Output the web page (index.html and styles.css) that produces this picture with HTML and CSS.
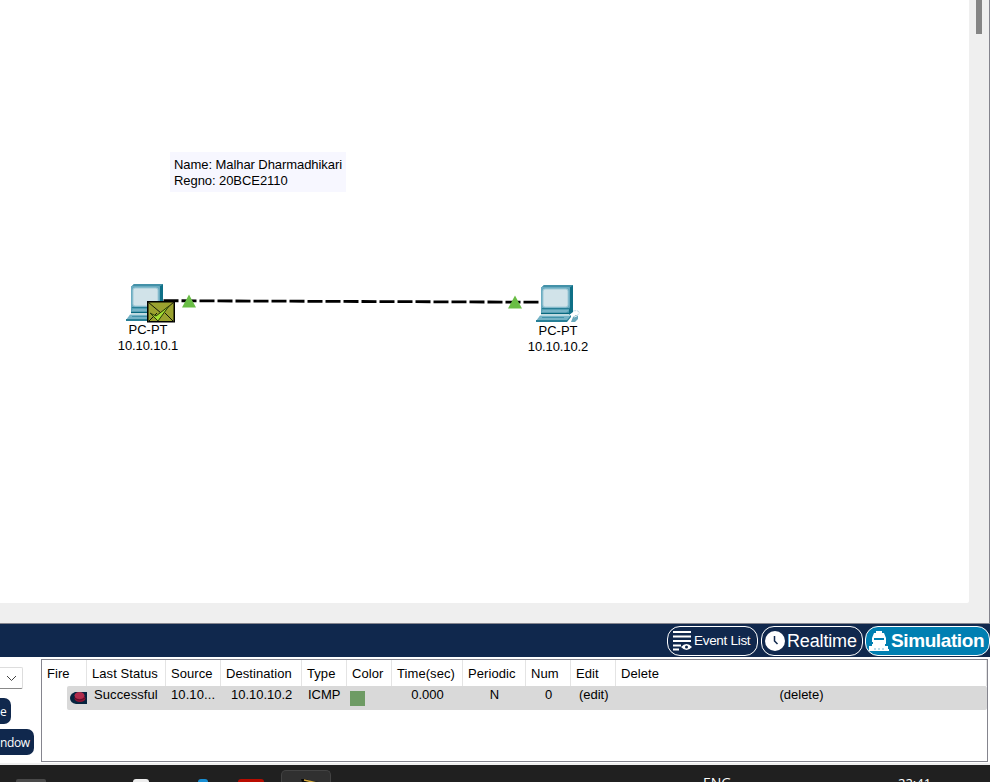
FILE: index.html
```html
<!DOCTYPE html>
<html lang="en">
<head>
<meta charset="utf-8">
<title>Network simulation</title>
<link rel="stylesheet" href="styles.css">
</head>
<body>
<svg class="defs" width="0" height="0" aria-hidden="true">
  <symbol id="pc" viewBox="0 0 46 38">
    <path d="M5 3 8 0H37V26L34 29H5Z" fill="#54a0b5"/>
    <path d="M33 3 37 0V27L33 30Z" fill="#0f7087"/>
    <path d="M5 3 8 0H37L33 3Z" fill="#4391a8"/>
    <rect x="5" y="2" width="29" height="21" rx="1" fill="#69abc0"/>
    <rect x="7" y="4" width="25" height="18" rx="2" fill="#d1e3e9" stroke="#a0cad7"/>
    <path d="M6 23.500h28" stroke="#277e94"/>
    <path d="M7 25h26l-3 3H5Z" fill="#75b3c6"/>
    <path d="M5 28.500h28" stroke="#08687f" stroke-width="1.500"/>
    <path d="M4 30.500H35L31 36H0Z" fill="#75b3c6"/>
    <path d="M0 35H31L35 30V32L31 37H0Z" fill="#277f96"/>
    <path d="M6 32.500h22" stroke="#4393aa"/>
    <path d="m37 32 3-2 2 1v3l-3 3h-4Z" fill="#69a8bb"/>
    <path d="m38 32 3-1" stroke="#e5eff3"/>
    <path d="M37 26q5-1 6 1t-3 4" fill="none" stroke="#c2dce4" stroke-dasharray="3 1"/>
  </symbol>
</svg>
<main class="workspace">
  <svg class="links" width="969" height="603">
    <line class="cable" x1="163.500" y1="300.700" x2="539" y2="302.200"/>
    <path class="port" d="m189 294.500 7 13h-14ZM515 295.500l7 13h-14Z"/>
  </svg>
  <div class="note"><span>Name: Malhar Dharmadhikari</span><br><span class="reg">Regno: 20BCE2110</span></div>
  <div class="node first">
    <svg class="computer" width="46" height="38"><use href="#pc"/></svg>
    <span class="kind">PC-PT</span><span class="ip">10.10.10.1</span>
    <svg class="mail" width="28" height="22" viewBox="0 0 28 22">
      <path d="M.75.75h26.500v20H.75Z" fill="#9aa22f" stroke="#000" stroke-width="1.500"/>
      <path d="m1 1 13 11L27 1M1 21l9-9M27 21l-9-9" fill="none" stroke="#15180a"/>
      <path d="m3 12 6 3L22 5 11 20Z" fill="#a4df32" stroke="#283908"/>
    </svg>
  </div>
  <div class="node second">
    <svg class="computer" width="46" height="38"><use href="#pc"/></svg>
    <span class="kind">PC-PT</span><span class="ip">10.10.10.2</span>
  </div>
</main>
<aside class="scroll"><div class="thumb"></div></aside>
<div class="gutter"></div>
<nav class="modes">
  <button class="events"><svg width="20" height="22" viewBox="0 0 20 22">
    <path d="M0 2h18M0 6.500h18M0 11h18M0 15.500h8M0 19.500h6" stroke="#fff" stroke-width="2"/>
    <path d="M8 17q5.500-6 11 0-5.500 6-11 0Z" fill="#fff"/><circle cx="13.500" cy="17" r="1.500" fill="#10284d"/>
  </svg><span>Event List</span></button>
  <button class="realtime"><svg width="20" height="20" viewBox="0 0 20 20"><circle cx="10" cy="10" r="10" fill="#fff"/><path d="M9.500 5v5l3 3" fill="none" stroke="#10284d" stroke-width="1.500"/></svg><span>Realtime</span></button>
  <button class="simulation"><svg width="20" height="20" viewBox="0 0 20 20">
    <path d="M7 0h6v2h2l2 5v6h-1v2h3v3h1v2H0v-5h3v-2h1V11H3V7l2-5h2Z" fill="#fff"/><path d="M5 8h10" stroke="#007fb2" stroke-width="2"/><path d="M6 17v2M10 17v2M14 17v2" stroke="#75b9d4"/>
  </svg><span>Simulation</span></button>
</nav>
<section class="bottom">
  <div class="controls">
    <div class="select"><svg width="11" height="7"><path d="m1 1 4.500 4.500L10 1" fill="none" stroke="#444"/></svg></div>
    <button class="new">e</button>
    <button class="toggle">ndow</button>
  </div>
  <div class="events-table">
    <div class="row head">
      <span>Fire</span><span>Last Status</span><span>Source</span><span>Destination</span><span>Type</span><span>Color</span><span>Time(sec)</span><span>Periodic</span><span>Num</span><span>Edit</span><span>Delete</span>
    </div>
    <div class="row data">
      <span class="fire"><svg width="18" height="14" viewBox="0 0 18 14"><path d="M5 1h12v12H6Q0 12 0 7 0 3 5 1Z" fill="#06243f"/><ellipse cx="10" cy="7.500" rx="5.500" ry="3.500" fill="#8c1433"/><ellipse cx="9.500" cy="4.500" rx="5" ry="3.500" fill="#b02b4b"/><path d="M4.500 7q5 4 10.500 0" fill="none" stroke="#5a0d2a"/></svg></span>
      <span class="status">Successful</span><span class="source">10.10...</span><span class="dest">10.10.10.2</span><span class="type">ICMP</span><span class="color"><i></i></span><span class="mid">0.000</span><span class="mid">N</span><span class="mid">0</span><span class="edit">(edit)</span><span class="mid">(delete)</span>
    </div>
  </div>
</section>
<footer class="taskbar">
  <div class="app gray"></div><div class="app round"></div><div class="app blue"></div><div class="app red"></div>
  <div class="app active"><svg width="20" height="6"><path d="M0 0h5l4 2 9 1v3H2Z" fill="#080808"/><path d="m3 1 13 3" stroke="#d8ad42" stroke-width="1.500"/></svg></div>
  <span class="lang">ENG</span><span class="clock">22:41</span>
</footer>
</body>
</html>
```

FILE: styles.css
```css
* { box-sizing: border-box; }
body {
  margin: 0; width: 990px; height: 782px; overflow: hidden;
  display: grid; grid-template-columns: 969px 21px; grid-template-rows: 603px 21px 34px 107px 17px;
  background: #efefef; color: #000; font: 13px/16px "Liberation Sans", Arial, sans-serif;
}
button { margin: 0; padding: 0; border: 0; color: #fff; font: inherit; }
svg { display: block; flex: none; }
.defs { position: absolute; }
.workspace { position: relative; background: #fff; border-bottom-right-radius: 2px; }
.links { position: absolute; inset: 0; }
.cable { stroke: #000; stroke-width: 2.800; stroke-dasharray: 15 3; }
.port { fill: #69bd45; }
.note { position: absolute; left: 170px; top: 152px; width: 176px; height: 40px; padding: 5px 4px; background: #f7f7ff; white-space: nowrap; letter-spacing: -.07px; }
.node { position: absolute; width: 64px; height: 72px; display: flex; flex-direction: column; align-items: center; }
.first { left: 116px; top: 284px; }
.second { left: 526px; top: 285px; }
.computer { height: 38px; align-self: flex-start; margin-left: 10px; }
.kind { height: 16px; }
.ip { letter-spacing: -.1px; }
.mail { position: absolute; left: 31px; top: 17px; }
.scroll { padding-left: 7px; border-right: 1px solid #85858e; }
.thumb { width: 6px; height: 34px; background: #858585; }
.gutter { grid-column: 1 / 3; border-bottom: 1px solid #85858e; border-right: 1px solid #85858e; }
.modes { grid-column: 1 / 3; background: #10284d; display: flex; justify-content: flex-end; align-items: center; gap: 3px; border-bottom: 1px solid #fff; }
.modes button { height: 30px; display: flex; align-items: center; border: 1px solid #fff; border-radius: 13px; background: #10284d; white-space: nowrap; }
.modes .events { width: 91px; padding-left: 5px; gap: 1px; font-size: 13.500px; letter-spacing: -.3px; }
.modes .realtime { width: 102px; padding-left: 3px; gap: 2px; font-size: 18px; letter-spacing: -.15px; }
.modes .simulation { width: 125px; margin-left: -1px; padding-left: 3px; gap: 2px; font-size: 19px; font-weight: bold; letter-spacing: -.4px; background: #007fb2; }
.bottom { grid-column: 1 / 3; display: grid; grid-template-columns: 41px 947px; background: #fff; border-bottom: 2px solid #efefef; padding-top: 1px; }
.controls { display: flex; flex-direction: column; align-items: flex-start; }
.select { width: 23px; height: 22px; margin-top: 8px; display: flex; align-items: center; justify-content: center; border: 1px solid #ddd; border-left: 0; border-bottom-color: #888; border-radius: 0 2px 2px 0; }
.controls button { height: 26px; background: #10284d; border-radius: 0 7px 7px 0; text-align: right; padding-right: 5px; font: 12px "Open Sans", sans-serif; }
.new { width: 11px; margin: 9px 0 5px; }
.toggle { width: 34px; }
.controls .toggle { letter-spacing: -.4px; }
.events-table { height: 103px; border: 1px solid #85858e; }
.row { display: grid; grid-template-columns: 45px 79px 55px 81px 45px 45px 71px 63px 45px 45px 1fr; white-space: nowrap; letter-spacing: .07px; }
.head { height: 26px; }
.head span { padding: 6px 0 0 5px; border-right: 1px solid #e4e4e4; }
.data { grid-template-columns: 20px 79px 55px 81px 45px 45px 71px 63px 45px 45px 1fr; height: 24px; margin-left: 25px; padding-top: 1px; background: #d9d9d9; border-radius: 2px; letter-spacing: -.02px; }
.fire { padding: 4px 0 0 3px; }
.status { padding-left: 7px; letter-spacing: .1px; }
.source { padding-left: 5px; letter-spacing: .1px; }
.dest { padding-left: 10px; }
.type { padding-left: 6px; }
.color { padding: 4px 0 0 3px; }
.color i { display: block; width: 15px; height: 15px; background: #6e9b64; }
.mid { text-align: center; }
.edit { padding-left: 8px; }
.taskbar { grid-column: 1 / 3; height: 17px; overflow: hidden; background: #202020; color: #fff; display: grid; grid-template-rows: 17px; grid-template-columns: 16px 30px 87px 16px 49px 10px 30px 26px 17px 50px 372px 194px 1fr; }
.app { align-self: end; grid-row: 1; }
.gray { grid-column: 2; height: 3px; background: #494949; border-radius: 2px 2px 0 0; }
.round { grid-column: 4; height: 3px; background: #eee; border-radius: 8px 8px 0 0; }
.blue { grid-column: 6; height: 3px; background: #188ed3; border-radius: 5px 5px 0 0; }
.red { grid-column: 8; height: 3px; background: #b90c00; border-radius: 3px 3px 0 0; }
.active { grid-column: 10; height: 12px; padding: 8px 0 0 19px; background: #303030; border: 1px solid #434343; border-bottom: 0; border-radius: 5px 5px 0 0; overflow: hidden; }
.lang, .clock { grid-row: 1; font: 14px/16px "Open Sans", sans-serif; padding-top: 10px; }
.lang { grid-column: 12; }
.clock { grid-column: 13; font-size: 13px; padding-left: 1px; }
```
